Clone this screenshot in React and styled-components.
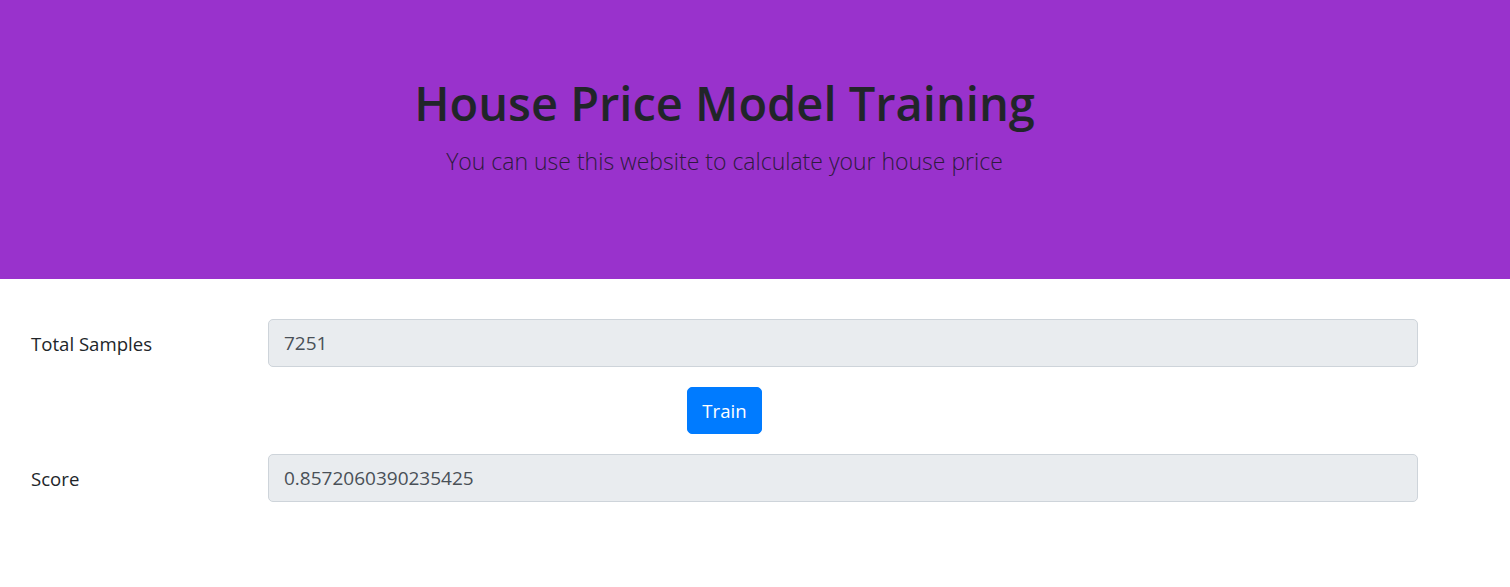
import React from "react";
import styled, { createGlobalStyle } from "styled-components";

const GlobalStyle = createGlobalStyle`
  body {
    margin: 0;
    font-family: "Open Sans", "Noto Sans", sans-serif;
    color: #212529;
    background: #fff;
  }
`;

const Header = styled.header`
  box-sizing: border-box;
  height: 279px;
  padding-top: 75px;
  background: #9932cc;
`;

const HeaderInner = styled.div`
  width: 1449px;
  text-align: center;
`;

const Title = styled.h1`
  margin: 0 0 13px;
  font-size: 47px;
  font-weight: 600;
  line-height: 1.2;
  color: #212529;
`;

const Lead = styled.p`
  margin: 0;
  font-size: 23px;
  font-weight: 300;
  line-height: 1.5;
  color: #2e1a3e;
`;

const Form = styled.form`
  padding-top: 40px;
  display: flex;
  flex-direction: column;
  gap: 20px;
`;

const Row = styled.div`
  display: flex;
  align-items: center;
`;

const Label = styled.label`
  box-sizing: border-box;
  width: 268px;
  padding-left: 31px;
  font-size: 18.6px;
  color: #212529;
`;

const Field = styled.input`
  box-sizing: border-box;
  width: 1150px;
  height: 48px;
  padding: 0 15px;
  border: 1px solid #ced4da;
  border-radius: 5px;
  background: #e9ecef;
  font-family: inherit;
  font-size: 19px;
  color: #495057;
  outline: none;
`;

const ButtonRow = styled.div`
  width: 1449px;
  display: flex;
  justify-content: center;
`;

const Button = styled.button`
  height: 47px;
  padding: 0 14px;
  border: 1px solid #007bff;
  border-radius: 5px;
  background: #007bff;
  color: #fff;
  font-family: inherit;
  font-size: 18.6px;
  cursor: pointer;
`;

export default function App() {
  return (
    <>
      <GlobalStyle />
      <Header>
        <HeaderInner>
          <Title>House Price Model Training</Title>
          <Lead>You can use this website to calculate your house price</Lead>
        </HeaderInner>
      </Header>
      <Form onSubmit={(e) => e.preventDefault()}>
        <Row>
          <Label>Total Samples</Label>
          <Field type="text" value="7251" readOnly />
        </Row>
        <ButtonRow>
          <Button type="submit">Train</Button>
        </ButtonRow>
        <Row>
          <Label>Score</Label>
          <Field type="text" value="0.8572060390235425" readOnly />
        </Row>
      </Form>
    </>
  );
}
